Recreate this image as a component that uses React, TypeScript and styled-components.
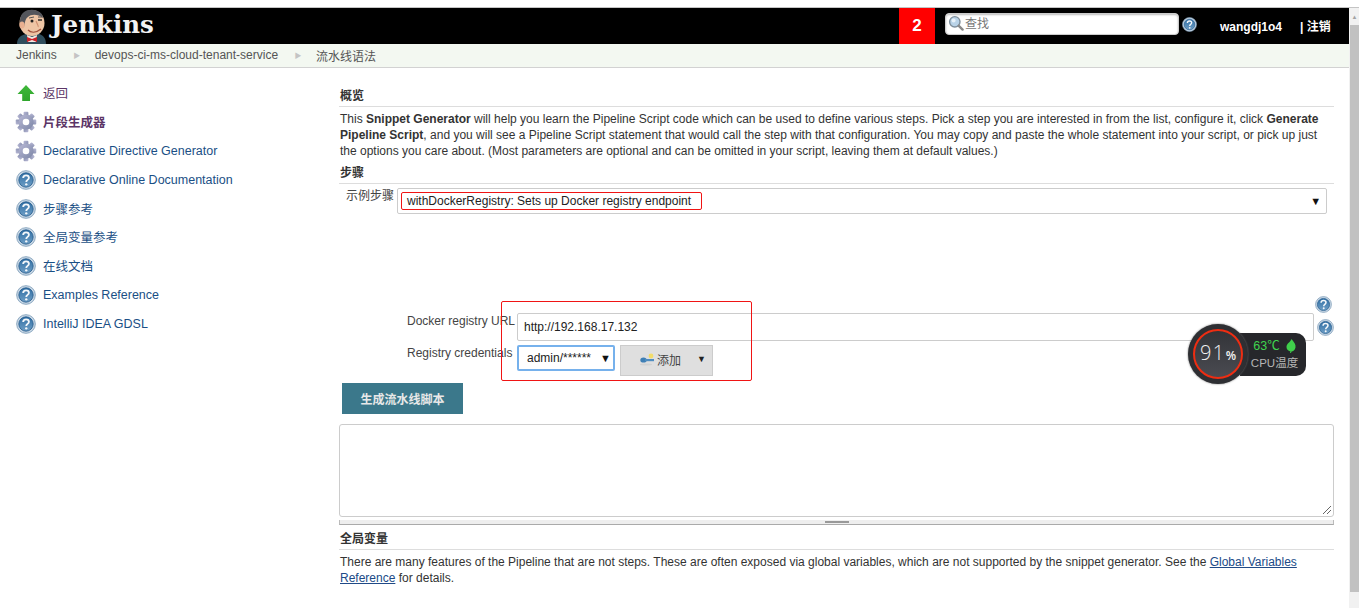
import React from "react";
import styled, { createGlobalStyle } from "styled-components";

const Global = createGlobalStyle`
  html, body { margin: 0; padding: 0; height: 100%; overflow: hidden; background: #fff; }
  body { font-family: "Liberation Sans", "Noto Sans CJK SC", sans-serif; font-size: 12px; color: #333; }
  * { box-sizing: border-box; }
`;

const Shell = styled.div`height: 608px; display: flex; flex-direction: column; position: relative; overflow: hidden;`;
const TopStrip = styled.div`height: 8px; flex: none; background: #fff; border-bottom: 1px solid #c4c4c4;`;
const Frame = styled.div`flex: 1; display: flex; min-height: 0;`;
const Page = styled.div`flex: 1; min-width: 0; display: flex; flex-direction: column;`;
const Scrollbar = styled.div`width: 10px; flex: none; background: #f1f1f1; display: flex; flex-direction: column; align-items: stretch; padding-left: 1px;`;
const ScrollArrow = styled.div`height: 17px; display: flex; align-items: center; justify-content: center; color: #a3a3a3; font-size: 6px;`;
const ScrollThumb = styled.div`height: 567px; background: #c1c1c1;`;

const Header = styled.header`height: 36px; flex: none; background: #000; display: flex; align-items: stretch;`;
const Brand = styled.div`width: 899px; display: flex; align-items: flex-end; padding-left: 16px; gap: 3px;`;
const BrandName = styled.span`font-family: "DejaVu Serif", "Liberation Serif", serif; font-weight: 700; font-size: 24.5px; line-height: 34px; color: #f2f2f2; align-self: flex-start;`;
const Badge = styled.div`width: 36px; background: #f00; color: #fff; font-weight: 700; font-size: 17px; display: flex; align-items: center; justify-content: center; font-family: "Liberation Sans", sans-serif;`;
const SearchBox = styled.div`margin: 5px 0 0 10px; width: 234px; height: 22px; background: #fff; border: 1px solid #ccc; border-radius: 4px; box-shadow: inset 0 1px 2px #bbb; display: flex; align-items: center; gap: 1px; padding: 0 0 3px 2px; color: #777; font-size: 12px;`;
const HeaderHelp = styled.div`margin: 9px 0 0 3px; width: 15px; height: 15px;`;
const UserName = styled.div`margin: 0 0 0 23px; width: 81px; color: #fff; font-weight: 700; font-size: 12px; line-height: 38px; white-space: nowrap;`;
const Logout = styled.div`color: #fff; font-weight: 700; font-size: 12px; line-height: 38px; margin-left: -1px; white-space: nowrap;`;

const Crumbs = styled.nav`height: 24px; flex: none; background: #f3f8f1; border-bottom: 1px solid #d2d2d2; display: flex; align-items: center; padding-left: 16px; color: #555; font-size: 12px; padding-bottom: 1px;`;
const Crumb = styled.span`white-space: nowrap;`;
const CrumbArrow = styled.span<{ $w: number }>`width: ${p => p.$w}px; display: flex; justify-content: center; padding-left: 2px; color: #c4c4c4; font-size: 7px;`;

const Body = styled.div`flex: 1; display: flex; min-height: 0;`;
const Side = styled.aside`width: 339px; flex: none; padding: 11px 0 0 15px; display: flex; flex-direction: column;`;
const SideItem = styled.div`height: 28.8px; display: flex; align-items: center; gap: 6px; font-size: 12.5px; color: #204a87; white-space: nowrap;`;
const SideLink = styled.a<{ $visited?: boolean; $bold?: boolean; $latin?: boolean }>`color: ${p => (p.$visited ? "#5c3566" : "#1a4f85")}; font-weight: ${p => (p.$bold ? 700 : 400)}; margin-top: ${p => (p.$latin ? "1px" : "-1px")};`;
const SideIcon = styled.span`width: 22px; height: 22px; display: flex; align-items: center; justify-content: center; flex: none;`;

const Main = styled.main`width: 995px; padding-top: 20px; display: flex; flex-direction: column;`;
const SectionTitle = styled.h3`margin: 0; padding: 0 0 2px 1px; font-size: 12px; font-weight: 700; line-height: 16px; color: #333; border-bottom: 1px solid #ddd;`;
const Para = styled.p`margin: 4px 0 0; padding-left: 1px; line-height: 16px; font-size: 12px; color: #333; width: 985px;`;
const StepTitle = styled(SectionTitle)`margin-top: 6px;`;
const StepRow = styled.div`display: flex; align-items: flex-start; padding-left: 7px; margin-top: 4px; gap: 3px;`;
const FieldLabel = styled.label`font-size: 12px; color: #444; line-height: 16px; white-space: nowrap;`;
const StepSelect = styled.div`width: 930px; height: 26px; border: 1px solid #ccc; border-radius: 2px; display: flex; align-items: center; justify-content: space-between; padding: 0 5px 0 9px; font-size: 12px; color: #222;`;
const Caret = styled.span`font-size: 11px; color: #111;`;

const HelpRow = styled.div`height: 17px; margin-top: 82px; display: flex; justify-content: flex-end; padding-right: 2px; align-items: center;`;
const CredRow = styled.div`display: flex; align-items: flex-start; padding-left: 68px;`;
const UrlLabel = styled(FieldLabel)`width: 110px; padding-top: 0;`;
const UrlInput = styled.div`width: 797px; height: 28px; border: 1px solid #ccc; border-radius: 2px; display: flex; align-items: center; padding-left: 6px; font-size: 12px; color: #222;`;
const UrlHelp = styled.div`margin: 6px 0 0 2px; display: flex; justify-content: flex-end; width: 18px;`;
const SecondRow = styled(CredRow)`margin-top: 4px;`;
const CredSelect = styled.div`width: 98px; height: 26px; border: 2px solid #76b1ec; border-radius: 2px; display: flex; align-items: center; justify-content: space-between; padding: 0 2px 0 8px; font-size: 12px; color: #222;`;
const AddButton = styled.div`margin-left: 5px; width: 93px; height: 31px; background: #dfdfdf; border: 1px solid #ccc; display: flex; align-items: center; padding: 0 0 3px 18px; font-size: 12px; color: #444; gap: 2px;`;
const AddCaret = styled.span`margin-left: 14px; font-size: 9px; color: #222;`;
const Generate = styled.div`margin: 7px 0 0 3px; width: 121px; height: 31px; background: #3b788b; color: #e8e8e8; font-weight: 700; font-size: 12px; display: flex; align-items: center; justify-content: center;`;
const Output = styled.div`margin-top: 10px; height: 93px; border: 1px solid #ccc; border-radius: 3px; position: relative;`;
const ResizeMark = styled.div`position: absolute; right: 1px; bottom: 1px; line-height: 0;`;
const Splitter = styled.div`margin-top: 3px; height: 5px; background: #eee; border-bottom: 1px solid #aaa; border-left: 1px solid #bbb; border-right: 1px solid #bbb; display: flex; justify-content: center;`;
const Grip = styled.span`width: 24px; height: 2px; background: #999; margin-top: 1px;`;
const GlobalTitle = styled(SectionTitle)`margin-top: 6px;`;
const Link = styled.a`color: #204a87; text-decoration: underline;`;
const Strong = styled.b`font-weight: 700;`;

const Annotation = styled.div`position: absolute; border: 1px solid #f01414; border-radius: 2px; pointer-events: none;`;
const StepMark = styled(Annotation)`left: 401px; top: 192px; width: 301px; height: 18px;`;
const FormMark = styled(Annotation)`left: 501px; top: 301px; width: 251px; height: 80px;`;

const Gauge = styled.div`position: absolute; left: 1188px; top: 324px; height: 60px; display: flex; align-items: center;`;
const GaugeDial = styled.div`width: 60px; height: 60px; border-radius: 50%; background: #2e2f33; display: flex; align-items: center; justify-content: center; z-index: 1; box-shadow: 0 0 2px #666;`;
const GaugeFace = styled.div`width: 50px; height: 50px; border-radius: 50%; border: 2px solid #ee2d12; background: linear-gradient(#333438, #4a4b51); color: #f1f1f1; display: flex; align-items: baseline; justify-content: center; padding-top: 9px; font-size: 20px; line-height: 26px; font-weight: 300; letter-spacing: 1.5px; font-family: "Open Sans", sans-serif;`;
const GaugePct = styled.span`font-size: 12px; font-weight: 600; letter-spacing: 0;`;
const GaugePanel = styled.div`margin-left: -8px; width: 66px; height: 43px; background: #26272b; border-radius: 0 10px 10px 0; padding: 6px 0 0 3px; display: flex; flex-direction: column; align-items: center; gap: 1px; font-size: 11.5px;`;
const GaugeTemp = styled.div`color: #3fd34e; display: flex; align-items: center; gap: 6px; line-height: 15px; font-size: 12.5px;`;
const GaugeName = styled.div`color: #b5b5b5; line-height: 16px; white-space: nowrap;`;

const HelpIcon = ({ size = 18 }: { size?: number }) => {
  const id = React.useId();
  return (
    <svg width={size} height={size} viewBox="0 0 24 24">
      <defs>
        <linearGradient id={id} x1="0" y1="0" x2="0" y2="1">
          <stop offset="0" stopColor="#2f6ea4" />
          <stop offset="1" stopColor="#6f9fc6" />
        </linearGradient>
      </defs>
      <circle cx="12" cy="12" r="11.2" fill="#c9d8e6" stroke="#7b9bb7" strokeWidth="1" />
      <circle cx="12" cy="12" r="8.6" fill={`url(#${id})`} stroke="#235a8c" strokeWidth="1" />
      <path d="M8.600 9.600c0-2 1.600-3.200 3.500-3.200s3.400 1.100 3.400 2.900c0 2.600-3.200 2.500-3.200 5" fill="none" stroke="#f4f7fa" strokeWidth="2.200" />
      <circle cx="12.300" cy="17.200" r="1.400" fill="#f4f7fa" />
    </svg>
  );
};

const GearIcon = () => {
  const id = React.useId();
  const teeth = [0, 45, 90, 135, 180, 225, 270, 315];
  return (
    <svg width="22" height="22" viewBox="0 0 24 24">
      <defs>
        <linearGradient id={id} x1="0" y1="0" x2="1" y2="1">
          <stop offset="0" stopColor="#b9b9d6" />
          <stop offset="1" stopColor="#7c86a6" />
        </linearGradient>
      </defs>
      {teeth.map(a => (
        <rect key={a} x="9.400" y="0.800" width="5.200" height="6" rx="1" fill={`url(#${id})`} transform={`rotate(${a} 12 12)`} />
      ))}
      <circle cx="12" cy="12" r="8.200" fill={`url(#${id})`} />
      <circle cx="12" cy="12" r="3.600" fill="#fff" />
    </svg>
  );
};

const UpArrow = () => (
  <svg width="20" height="20" viewBox="0 0 20 20">
    <defs>
      <linearGradient id="upgreen" x1="0" y1="0" x2="0" y2="1">
        <stop offset="0" stopColor="#3fb83a" />
        <stop offset="1" stopColor="#2fa52c" />
      </linearGradient>
    </defs>
    <path d="M10 2 L18.500 11 H14 V18 H6.200 V11 H1.500 Z" fill="url(#upgreen)" />
  </svg>
);

const Butler = () => (
  <svg width="32" height="36" viewBox="0 0 32 36">
    <path d="M1 36c0-6 4-9 9-10l6 1 7-1c4 1 7 4 7 10z" fill="#2f4d5c" />
    <path d="M11 27l5 2 5-2-1 7h-8z" fill="#f0ebe3" />
    <path d="M11 29l5 2 5-2v5l-5-2-5 2z" fill="#cc2127" />
    <ellipse cx="16" cy="15" rx="12.500" ry="13" fill="#eec5a5" />
    <path d="M5 18C2 10 6 2 14 2c7-1 13 3 13 8-5-4-12-4-15-1-3 2-3 6-4 10z" fill="#54565c" />
    <ellipse cx="6" cy="17" rx="2.600" ry="3.600" fill="#e8b090" />
    <circle cx="16" cy="13" r="1.500" fill="#222" />
    <path d="M22 12h4" stroke="#222" strokeWidth="1.400" />
    <path d="M13 10l5-1M22 9l4 0" stroke="#555" strokeWidth="1" />
    <path d="M12 22c3 3 8 3 13-1" fill="none" stroke="#a3513c" strokeWidth="1.400" />
    <path d="M20 13c1 3 3 5 2 6" fill="none" stroke="#cf8f70" strokeWidth="1.200" />
  </svg>
);

const SearchIcon = () => (
  <svg width="16" height="16" viewBox="0 0 16 16">
    <circle cx="6.800" cy="6.800" r="5.200" fill="#b9d3e8" stroke="#7f8f9c" strokeWidth="1.400" />
    <circle cx="5.600" cy="5.400" r="2" fill="#e8f2fa" />
    <path d="M10.800 10.800L14.600 14.600" stroke="#8a8a8a" strokeWidth="2.400" strokeLinecap="round" />
  </svg>
);

const KeyIcon = () => (
  <svg width="16" height="14" viewBox="0 0 16 14">
    <circle cx="12" cy="4" r="2.400" fill="#f2dc6b" />
    <ellipse cx="4.500" cy="8" rx="3.200" ry="2.600" fill="#3f7fb5" />
    <rect x="6" y="7" width="9" height="2.200" fill="#4f8dc0" />
    <ellipse cx="7" cy="12.500" rx="6" ry="1" fill="#d2d2d2" />
  </svg>
);

const LeafIcon = () => (
  <svg width="10" height="14" viewBox="0 0 10 14">
    <path d="M5.500 0C8 3 10 5.500 9.500 8.500 9 11 7 12.500 5.500 12.500L5 14 4 14 4.500 12.500C2 12 .2 10 .5 7.500.8 4.500 4.500 3 5.500 0z" fill="#3fcf4b" />
  </svg>
);

const sideItems: { label: string; icon: "gear" | "help" | "up"; visited?: boolean; bold?: boolean; latin?: boolean }[] = [
  { label: "返回", icon: "up", visited: true },
  { label: "片段生成器", icon: "gear", visited: true, bold: true },
  { label: "Declarative Directive Generator", icon: "gear", latin: true },
  { label: "Declarative Online Documentation", icon: "help", latin: true },
  { label: "步骤参考", icon: "help" },
  { label: "全局变量参考", icon: "help" },
  { label: "在线文档", icon: "help" },
  { label: "Examples Reference", icon: "help", latin: true },
  { label: "IntelliJ IDEA GDSL", icon: "help", latin: true },
];

export default function App() {
  return (
    <Shell>
      <Global />
      <TopStrip />
      <Frame>
        <Page>
          <Header>
            <Brand>
              <Butler />
              <BrandName>Jenkins</BrandName>
            </Brand>
            <Badge>2</Badge>
            <SearchBox>
              <SearchIcon />
              查找
            </SearchBox>
            <HeaderHelp>
              <HelpIcon size={15} />
            </HeaderHelp>
            <UserName>wangdj1o4</UserName>
            <Logout>| 注销</Logout>
          </Header>
          <Crumbs>
            <Crumb>Jenkins</Crumb>
            <CrumbArrow $w={38}>▶</CrumbArrow>
            <Crumb>devops-ci-ms-cloud-tenant-service</Crumb>
            <CrumbArrow $w={38}>▶</CrumbArrow>
            <Crumb>流水线语法</Crumb>
          </Crumbs>
          <Body>
            <Side>
              {sideItems.map(item => (
                <SideItem key={item.label}>
                  <SideIcon>
                    {item.icon === "gear" ? <GearIcon /> : item.icon === "up" ? <UpArrow /> : <HelpIcon size={20} />}
                  </SideIcon>
                  <SideLink $visited={item.visited} $bold={item.bold} $latin={item.latin}>{item.label}</SideLink>
                </SideItem>
              ))}
            </Side>
            <Main>
              <SectionTitle>概览</SectionTitle>
              <Para>
                This <Strong>Snippet Generator</Strong> will help you learn the Pipeline Script code which can be used to define various steps. Pick a step you are interested in from the list, configure it, click <Strong>Generate Pipeline Script</Strong>, and you will see a Pipeline Script statement that would call the step with that configuration. You may copy and paste the whole statement into your script, or pick up just the options you care about. (Most parameters are optional and can be omitted in your script, leaving them at default values.)
              </Para>
              <StepTitle>步骤</StepTitle>
              <StepRow>
                <FieldLabel>示例步骤</FieldLabel>
                <StepSelect>
                  withDockerRegistry: Sets up Docker registry endpoint
                  <Caret>▼</Caret>
                </StepSelect>
              </StepRow>
              <HelpRow>
                <HelpIcon size={17} />
              </HelpRow>
              <CredRow>
                <UrlLabel>Docker registry URL</UrlLabel>
                <UrlInput>http://192.168.17.132</UrlInput>
                <UrlHelp>
                  <HelpIcon size={17} />
                </UrlHelp>
              </CredRow>
              <SecondRow>
                <UrlLabel>Registry credentials</UrlLabel>
                <CredSelect>
                  admin/******
                  <Caret>▼</Caret>
                </CredSelect>
                <AddButton>
                  <KeyIcon />
                  添加
                  <AddCaret>▼</AddCaret>
                </AddButton>
              </SecondRow>
              <Generate>生成流水线脚本</Generate>
              <Output>
                <ResizeMark>
                  <svg width="10" height="10" viewBox="0 0 10 10">
                    <path d="M1 9L9 1M5 9L9 5" stroke="#666" strokeWidth="1" />
                  </svg>
                </ResizeMark>
              </Output>
              <Splitter>
                <Grip />
              </Splitter>
              <GlobalTitle>全局变量</GlobalTitle>
              <Para>
                There are many features of the Pipeline that are not steps. These are often exposed via global variables, which are not supported by the snippet generator. See the <Link>Global Variables Reference</Link> for details.
              </Para>
            </Main>
          </Body>
        </Page>
        <Scrollbar>
          <ScrollArrow>▲</ScrollArrow>
          <ScrollThumb />
        </Scrollbar>
      </Frame>
      <StepMark />
      <FormMark />
      <Gauge>
        <GaugeDial>
          <GaugeFace>
            91<GaugePct>%</GaugePct>
          </GaugeFace>
        </GaugeDial>
        <GaugePanel>
          <GaugeTemp>
            63℃<LeafIcon />
          </GaugeTemp>
          <GaugeName>CPU温度</GaugeName>
        </GaugePanel>
      </Gauge>
    </Shell>
  );
}
